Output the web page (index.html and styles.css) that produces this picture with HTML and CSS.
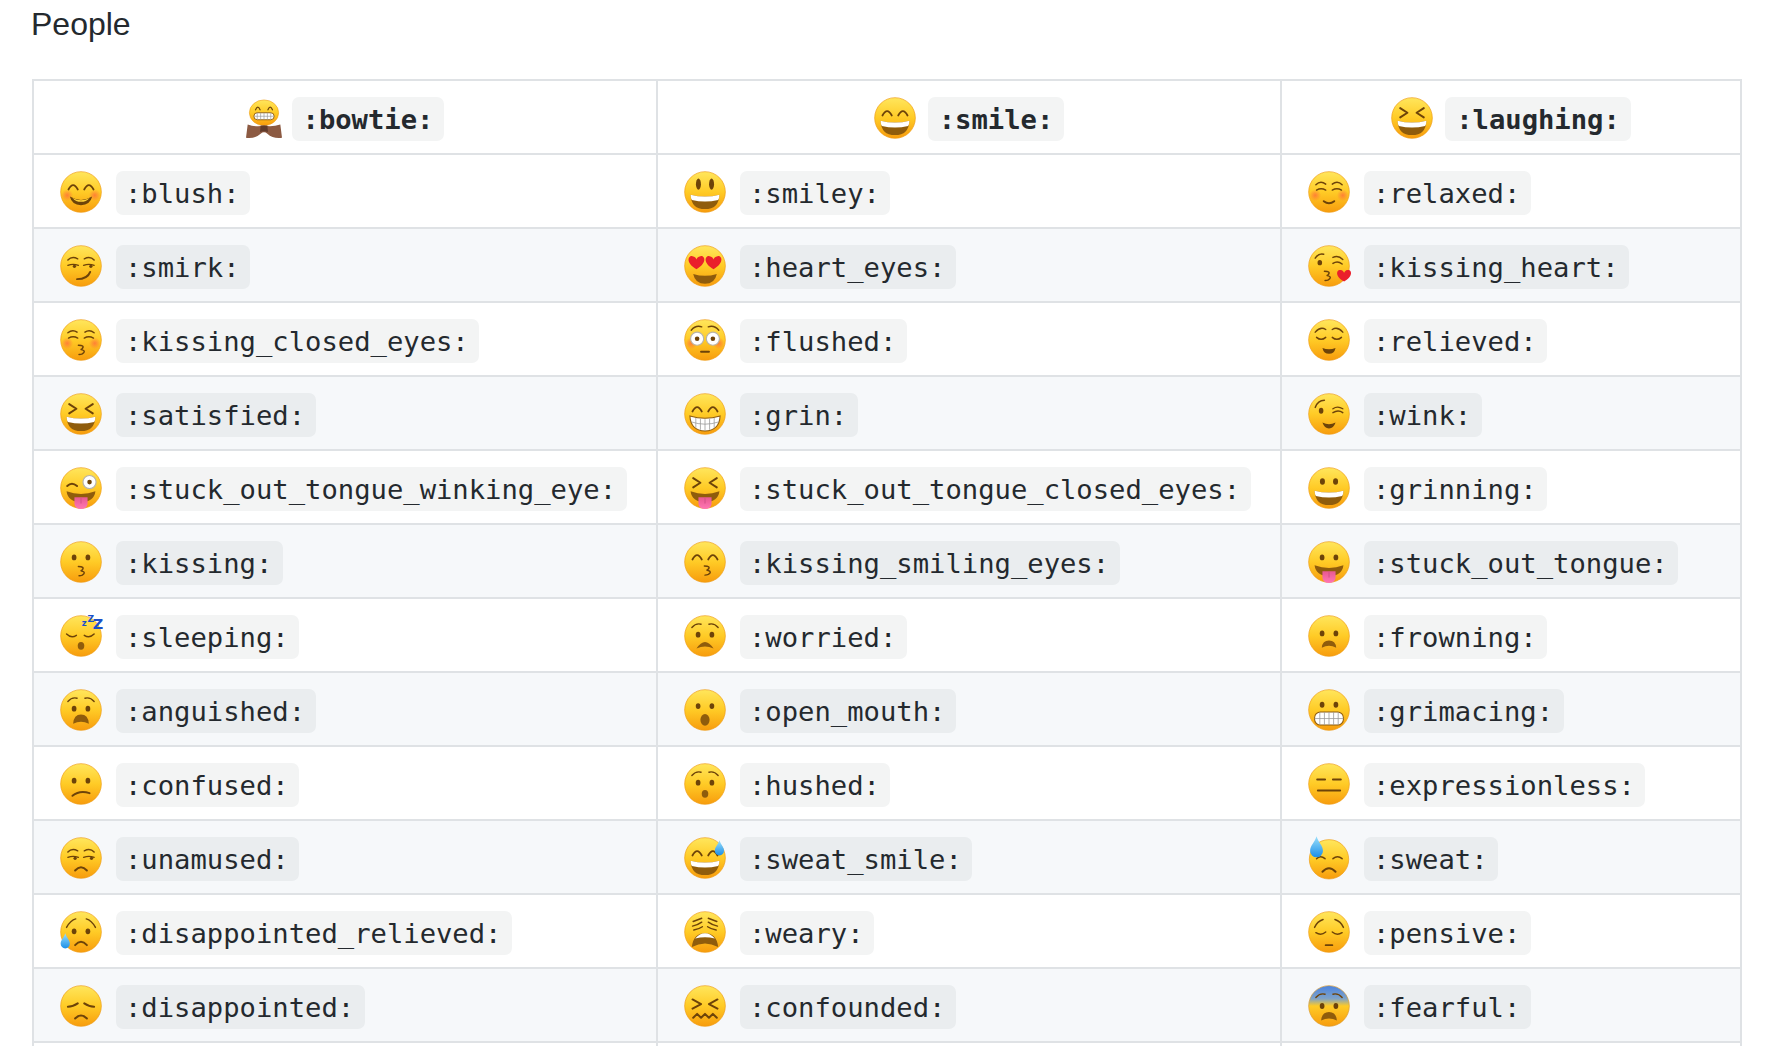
FILE: index.html
```html
<!DOCTYPE html>
<html lang="en">
<head>
<meta charset="utf-8">
<title>People</title>
<link rel="stylesheet" href="styles.css">
</head>
<body>
<svg class="sprite" aria-hidden="true">
  <defs>
    <linearGradient id="gFace" x1="0" y1="0" x2="0" y2="1">
      <stop offset="0" stop-color="#ffe65c"/><stop offset=".5" stop-color="#ffcb26"/><stop offset="1" stop-color="#f79c0d"/>
    </linearGradient>
    <linearGradient id="gFear" x1="0" y1="0" x2="0" y2="1">
      <stop offset="0" stop-color="#4a83e0"/><stop offset=".32" stop-color="#7fa3c8"/><stop offset=".5" stop-color="#ffcb26"/><stop offset="1" stop-color="#f79c0d"/>
    </linearGradient>
    <linearGradient id="gDrop" x1="0" y1="0" x2="0" y2="1">
      <stop offset="0" stop-color="#9be0fb"/><stop offset="1" stop-color="#1c8fe8"/>
    </linearGradient>
    <linearGradient id="gTongue" x1="0" y1="0" x2="0" y2="1">
      <stop offset="0" stop-color="#e8588f"/><stop offset="1" stop-color="#ff77b4"/>
    </linearGradient>
    <radialGradient id="gCheek">
      <stop offset="0" stop-color="#ff6a3c" stop-opacity=".75"/><stop offset="1" stop-color="#ff6a3c" stop-opacity="0"/>
    </radialGradient>

    <circle id="fc" class="face" cx="32" cy="32" r="31"/>
    <g id="cheeks"><circle cx="11" cy="37" r="9" fill="url(#gCheek)"/><circle cx="53" cy="37" r="9" fill="url(#gCheek)"/></g>
    <path id="eh" class="ln" d="M13 28Q20 15 27 28M37 28Q44 15 51 28"/>
    <g id="ed"><ellipse class="fl" cx="21.5" cy="25" rx="3.6" ry="4.4"/><ellipse class="fl" cx="42.5" cy="25" rx="3.6" ry="4.4"/></g>
    <path id="ex" class="ln" d="M14 17L25 24L14 31M50 17L39 24L50 31"/>
    <path id="bw" class="ln thin" d="M12 19Q18 12 26 14M52 19Q46 12 38 14"/>
    <g id="om"><path class="mo" d="M10 36Q32 42 54 36Q53 58 32 58Q11 58 10 36Z"/><path class="wh" d="M10 36Q32 42 54 36Q54 41 52 44Q32 49 12 44Q10 41 10 36Z"/></g>
    <path id="fr" class="ln" d="M23 51Q32 41 41 51"/>
    <path id="frs" class="mo" d="M19 52Q32 32 45 52Q32 46 19 52Z"/>
    <path id="ks" class="ln thin" d="M28 40Q38 40 34 45Q30 47 34 47Q40 49 34 53Q32 54 29 54"/>
    <path id="lids" class="ln thin" d="M12 23Q18 16 27 21M37 21Q46 16 52 23M12 31Q20 28 28 31M36 31Q44 28 52 31"/>
    <g id="tg"><path class="mo" d="M10 37Q32 45 54 37Q52 53 32 54Q12 53 10 37Z"/><path class="tongue" d="M22 46H42V56A10 8 0 0 1 22 56Z"/><path class="ln thin tline" d="M32 48V55"/></g>
    <path id="dr" class="drop" d="M0-13C2-6 7-3 7 3A7 7 0 0 1-7 3C-7-3-2-6 0-13Z"/>
    <path id="ht" class="heart" d="M0 8C-14 0-10-9-5-8-2-8 0-5 0-4 0-5 2-8 5-8 10-9 14 0 0 8Z"/>

    <g id="smile"><use href="#fc"/><use href="#eh"/><use href="#om"/></g>
    <g id="laughing"><use href="#fc"/><use href="#ex"/><use href="#om"/></g>
    <g id="bowtie">
      <ellipse class="face" cx="32" cy="27" rx="26" ry="22"/>
      <path class="ln thin" d="M17 22Q21 13 25 22M39 22Q43 13 47 22"/>
      <rect class="wh teeth" x="14" y="27" width="36" height="12" rx="6"/>
      <path class="tl" d="M14 33H50M20 27V39M26 27V39M32 27V39M38 27V39M44 27V39"/>
      <path class="bow" d="M3 47Q18 52 32 49Q46 52 61 47L64 70Q48 72 38 63Q32 58 26 63Q16 72 0 70Z"/>
      <path class="bowd" d="M26 49H38L39 60Q32 57 25 60Z"/>
    </g>
    <g id="blush"><use href="#fc"/><use href="#cheeks"/><use href="#eh"/><path class="fl" d="M15 39Q32 49 49 39Q46 52 32 52Q18 52 15 39Z"/><path class="face-fill" d="M19 41Q32 48 45 41Q40 47 32 47Q24 47 19 41Z"/></g>
    <g id="smiley"><use href="#fc"/><ellipse class="fl" cx="22" cy="20" rx="3.800" ry="8.500"/><ellipse class="fl" cx="42" cy="20" rx="3.800" ry="8.500"/><use href="#om"/></g>
    <g id="relaxed"><use href="#fc"/><use href="#cheeks"/><path class="ln thin" d="M12 21Q19 14 27 20M52 21Q45 14 37 20M13 29Q20 25 27 29M37 29Q44 25 51 29"/><path class="ln" d="M24 46Q32 52 40 46"/></g>
    <g id="smirk"><use href="#fc"/><use href="#lids"/><circle class="fl" cx="22" cy="32.500" r="2.500"/><circle class="fl" cx="47" cy="32.500" r="2.500"/><path class="ln" d="M26 52Q42 52 46 41"/></g>
    <g id="heart_eyes"><use href="#fc"/><path class="mo" d="M14 44Q32 50 50 44Q47 59 32 59Q17 59 14 44Z"/><use href="#ht" transform="translate(19 27) scale(1.250)"/><use href="#ht" transform="translate(45 27) scale(1.250)"/></g>
    <g id="kissing_heart"><use href="#fc"/><path class="ln thin" d="M11 20Q16 12 24 14M38 19Q46 15 53 22M38 28Q45 23 52 29"/><ellipse class="fl" cx="18" cy="27" rx="3.500" ry="4"/><use href="#ks" transform="translate(-3 0)"/><use href="#ht" transform="translate(55 47) scale(1.100)"/></g>
    <g id="kissing_closed_eyes"><use href="#fc"/><use href="#cheeks"/><path class="ln thin" d="M12 21Q19 15 26 20M52 21Q45 15 38 20M13 29Q20 25 27 29M37 29Q44 25 51 29"/><use href="#ks"/></g>
    <g id="flushed"><use href="#fc"/><use href="#cheeks"/><path class="ln thin" d="M11 17Q18 9 27 12M53 17Q46 9 37 12"/><circle class="eyew" cx="20" cy="30" r="10"/><circle class="eyew" cx="44" cy="30" r="10"/><circle class="fl" cx="20" cy="30" r="3.500"/><circle class="fl" cx="44" cy="30" r="3.500"/><path class="ln" d="M26 50H38"/></g>
    <g id="relieved"><use href="#fc"/><path class="ln thin" d="M11 20Q19 11 27 16M53 20Q45 11 37 16M13 28Q20 34 27 28M37 28Q44 34 51 28"/><path class="fl" d="M22 44Q32 48 42 44Q40 53 32 53Q24 53 22 44Z"/></g>
    <g id="grin"><use href="#fc"/><use href="#eh"/><path class="wh teeth" d="M9 35Q32 42 55 35Q54 57 32 58Q10 57 9 35Z"/><path class="tl" d="M11 44Q32 51 53 44M18 38V53M25 39V56M32 40V58M39 39V56M46 38V53"/></g>
    <g id="wink"><use href="#fc"/><path class="ln thin" d="M11 22Q15 11 25 11M38 24Q45 19 53 24M38 30Q46 25 53 30"/><ellipse class="fl" cx="20" cy="27" rx="3.500" ry="4.500"/><path class="fl" d="M22 45Q32 50 42 45Q39 54 32 54Q25 54 22 45Z"/></g>
    <g id="stuck_out_tongue_winking_eye"><use href="#fc"/><path class="ln" d="M11 29Q18 22 26 29"/><circle class="eyew" cx="45" cy="23" r="10"/><circle class="fl" cx="45" cy="23" r="3.500"/><use href="#tg"/></g>
    <g id="stuck_out_tongue_closed_eyes"><use href="#fc"/><use href="#ex"/><use href="#tg"/></g>
    <g id="grinning"><use href="#fc"/><ellipse class="fl" cx="22" cy="22" rx="3.800" ry="5"/><ellipse class="fl" cx="42" cy="22" rx="3.800" ry="5"/><use href="#om"/></g>
    <g id="kissing"><use href="#fc"/><use href="#ed"/><use href="#ks" transform="translate(0 -1)"/></g>
    <g id="kissing_smiling_eyes"><use href="#fc"/><use href="#eh"/><use href="#ks" transform="translate(3 -2)"/></g>
    <g id="stuck_out_tongue"><use href="#fc"/><use href="#ed"/><use href="#tg"/></g>
    <g id="sleeping"><use href="#fc"/><path class="ln thin" d="M10 29Q17 36 25 31M37 31Q45 36 52 29"/><ellipse class="mo" cx="32" cy="47" rx="5" ry="6"/><text class="zz z1" x="33" y="16">z</text><text class="zz z2" x="42" y="11">Z</text><text class="zz z3" x="50" y="21">Z</text></g>
    <g id="worried"><use href="#fc"/><use href="#bw"/><use href="#ed" transform="translate(0 5)"/><use href="#frs" transform="translate(0 -1)"/></g>
    <g id="frowning"><use href="#fc"/><use href="#ed" transform="translate(0 3)"/><path class="mo" d="M21 50Q22 39 32 39Q42 39 43 50Q32 44 21 50Z"/></g>
    <g id="anguished"><use href="#fc"/><use href="#bw"/><use href="#ed" transform="translate(0 5)"/><path class="mo" d="M20 53Q21 39 32 39Q43 39 44 53Q32 47 20 53Z"/></g>
    <g id="open_mouth"><use href="#fc"/><use href="#ed" transform="translate(0 1)"/><ellipse class="mo" cx="32" cy="47" rx="7" ry="9"/></g>
    <g id="grimacing"><use href="#fc"/><use href="#ed" transform="translate(0 -1)"/><rect class="wh teeth" x="10" y="35" width="44" height="20" rx="9"/><path class="tl" d="M10 45H54M18 35V55M25 35V55M32 35V55M39 35V55M46 35V55"/></g>
    <g id="confused"><use href="#fc"/><use href="#ed" transform="translate(0 2)"/><path class="ln" d="M19 50Q30 41 45 46"/></g>
    <g id="hushed"><use href="#fc"/><use href="#bw"/><use href="#ed" transform="translate(0 5)"/><ellipse class="mo" cx="32" cy="47" rx="5" ry="6"/></g>
    <g id="expressionless"><use href="#fc"/><path class="ln" d="M14 25H26M38 25H50M15 42H49"/></g>
    <g id="unamused"><use href="#fc"/><use href="#lids"/><circle class="fl" cx="23" cy="32.500" r="2.500"/><circle class="fl" cx="48" cy="32.500" r="2.500"/><use href="#fr"/></g>
    <g id="sweat_smile"><use href="#fc"/><use href="#eh"/><use href="#om"/><use href="#dr" transform="translate(54 18)"/></g>
    <g id="sweat"><circle class="face" cx="32" cy="34" r="30"/><path class="ln thin" d="M13 33Q19 27 26 33M38 33Q45 27 52 33"/><path class="ln" d="M22 53Q32 42 42 53"/><use href="#dr" transform="translate(13 17) scale(1.400)"/></g>
    <g id="disappointed_relieved"><use href="#fc"/><path class="ln thin" d="M10 25Q16 14 24 12M54 25Q48 14 40 12"/><use href="#ed" transform="translate(0 6)"/><use href="#fr" transform="translate(0 1)"/><use href="#dr" transform="translate(8 47)"/></g>
    <g id="weary"><use href="#fc"/><path class="ln thin" d="M14 16L27 11M50 16L37 11M13 23Q20 22 27 17M51 23Q44 22 37 17M15 29Q22 28 28 24M49 29Q42 28 36 24"/><path class="mo" d="M12 55Q14 34 32 34Q50 34 52 55Q32 44 12 55Z"/><path class="wh" d="M17 42Q24 34 32 34Q40 34 47 42Q32 38 17 42Z"/></g>
    <g id="pensive"><use href="#fc"/><path class="ln thin" d="M10 25Q14 16 23 13M54 25Q50 16 41 13M12 33Q20 38 27 32M37 32Q44 38 52 33"/><path class="ln" d="M27 52H37"/></g>
    <g id="disappointed"><use href="#fc"/><path class="ln" d="M12 33Q20 33 27 28M52 33Q44 33 37 28M23 51Q32 42 41 51"/></g>
    <g id="confounded"><use href="#fc"/><path class="ln" d="M13 22L26 29L13 36M51 22L38 29L51 36M14 50L20 44L26 50L32 44L38 50L44 44L50 50"/></g>
    <g id="fearful"><circle class="fear" cx="32" cy="32" r="31"/><use href="#bw"/><use href="#ed" transform="translate(0 7)"/><path class="mo" d="M20 54Q21 41 32 41Q43 41 44 54Q32 48 20 54Z"/></g>
  </defs>
</svg>

<h2 class="title">People</h2>

<table class="emoji-table">
  <colgroup><col class="col-wide"><col class="col-wide"><col class="col-narrow"></colgroup>
  <thead>
    <tr>
      <th><span class="item"><svg class="emo emo-bow" viewBox="0 0 64 72" preserveAspectRatio="none"><use href="#bowtie"/></svg><code>:bowtie:</code></span></th>
      <th><span class="item"><svg class="emo" viewBox="0 0 64 64"><use href="#smile"/></svg><code>:smile:</code></span></th>
      <th><span class="item"><svg class="emo" viewBox="0 0 64 64"><use href="#laughing"/></svg><code>:laughing:</code></span></th>
    </tr>
  </thead>
  <tbody>
    <tr>
      <td><span class="item"><svg class="emo" viewBox="0 0 64 64"><use href="#blush"/></svg><code>:blush:</code></span></td>
      <td><span class="item"><svg class="emo" viewBox="0 0 64 64"><use href="#smiley"/></svg><code>:smiley:</code></span></td>
      <td><span class="item"><svg class="emo" viewBox="0 0 64 64"><use href="#relaxed"/></svg><code>:relaxed:</code></span></td>
    </tr>
    <tr>
      <td><span class="item"><svg class="emo" viewBox="0 0 64 64"><use href="#smirk"/></svg><code>:smirk:</code></span></td>
      <td><span class="item"><svg class="emo" viewBox="0 0 64 64"><use href="#heart_eyes"/></svg><code>:heart_eyes:</code></span></td>
      <td><span class="item"><svg class="emo" viewBox="0 0 64 64"><use href="#kissing_heart"/></svg><code>:kissing_heart:</code></span></td>
    </tr>
    <tr>
      <td><span class="item"><svg class="emo" viewBox="0 0 64 64"><use href="#kissing_closed_eyes"/></svg><code>:kissing_closed_eyes:</code></span></td>
      <td><span class="item"><svg class="emo" viewBox="0 0 64 64"><use href="#flushed"/></svg><code>:flushed:</code></span></td>
      <td><span class="item"><svg class="emo" viewBox="0 0 64 64"><use href="#relieved"/></svg><code>:relieved:</code></span></td>
    </tr>
    <tr>
      <td><span class="item"><svg class="emo" viewBox="0 0 64 64"><use href="#laughing"/></svg><code>:satisfied:</code></span></td>
      <td><span class="item"><svg class="emo" viewBox="0 0 64 64"><use href="#grin"/></svg><code>:grin:</code></span></td>
      <td><span class="item"><svg class="emo" viewBox="0 0 64 64"><use href="#wink"/></svg><code>:wink:</code></span></td>
    </tr>
    <tr>
      <td><span class="item"><svg class="emo" viewBox="0 0 64 64"><use href="#stuck_out_tongue_winking_eye"/></svg><code>:stuck_out_tongue_winking_eye:</code></span></td>
      <td><span class="item"><svg class="emo" viewBox="0 0 64 64"><use href="#stuck_out_tongue_closed_eyes"/></svg><code>:stuck_out_tongue_closed_eyes:</code></span></td>
      <td><span class="item"><svg class="emo" viewBox="0 0 64 64"><use href="#grinning"/></svg><code>:grinning:</code></span></td>
    </tr>
    <tr>
      <td><span class="item"><svg class="emo" viewBox="0 0 64 64"><use href="#kissing"/></svg><code>:kissing:</code></span></td>
      <td><span class="item"><svg class="emo" viewBox="0 0 64 64"><use href="#kissing_smiling_eyes"/></svg><code>:kissing_smiling_eyes:</code></span></td>
      <td><span class="item"><svg class="emo" viewBox="0 0 64 64"><use href="#stuck_out_tongue"/></svg><code>:stuck_out_tongue:</code></span></td>
    </tr>
    <tr>
      <td><span class="item"><svg class="emo" viewBox="0 0 64 64"><use href="#sleeping"/></svg><code>:sleeping:</code></span></td>
      <td><span class="item"><svg class="emo" viewBox="0 0 64 64"><use href="#worried"/></svg><code>:worried:</code></span></td>
      <td><span class="item"><svg class="emo" viewBox="0 0 64 64"><use href="#frowning"/></svg><code>:frowning:</code></span></td>
    </tr>
    <tr>
      <td><span class="item"><svg class="emo" viewBox="0 0 64 64"><use href="#anguished"/></svg><code>:anguished:</code></span></td>
      <td><span class="item"><svg class="emo" viewBox="0 0 64 64"><use href="#open_mouth"/></svg><code>:open_mouth:</code></span></td>
      <td><span class="item"><svg class="emo" viewBox="0 0 64 64"><use href="#grimacing"/></svg><code>:grimacing:</code></span></td>
    </tr>
    <tr>
      <td><span class="item"><svg class="emo" viewBox="0 0 64 64"><use href="#confused"/></svg><code>:confused:</code></span></td>
      <td><span class="item"><svg class="emo" viewBox="0 0 64 64"><use href="#hushed"/></svg><code>:hushed:</code></span></td>
      <td><span class="item"><svg class="emo" viewBox="0 0 64 64"><use href="#expressionless"/></svg><code>:expressionless:</code></span></td>
    </tr>
    <tr>
      <td><span class="item"><svg class="emo" viewBox="0 0 64 64"><use href="#unamused"/></svg><code>:unamused:</code></span></td>
      <td><span class="item"><svg class="emo" viewBox="0 0 64 64"><use href="#sweat_smile"/></svg><code>:sweat_smile:</code></span></td>
      <td><span class="item"><svg class="emo" viewBox="0 0 64 64"><use href="#sweat"/></svg><code>:sweat:</code></span></td>
    </tr>
    <tr>
      <td><span class="item"><svg class="emo" viewBox="0 0 64 64"><use href="#disappointed_relieved"/></svg><code>:disappointed_relieved:</code></span></td>
      <td><span class="item"><svg class="emo" viewBox="0 0 64 64"><use href="#weary"/></svg><code>:weary:</code></span></td>
      <td><span class="item"><svg class="emo" viewBox="0 0 64 64"><use href="#pensive"/></svg><code>:pensive:</code></span></td>
    </tr>
    <tr>
      <td><span class="item"><svg class="emo" viewBox="0 0 64 64"><use href="#disappointed"/></svg><code>:disappointed:</code></span></td>
      <td><span class="item"><svg class="emo" viewBox="0 0 64 64"><use href="#confounded"/></svg><code>:confounded:</code></span></td>
      <td><span class="item"><svg class="emo" viewBox="0 0 64 64"><use href="#fearful"/></svg><code>:fearful:</code></span></td>
    </tr>
    <tr>
      <td></td>
      <td></td>
      <td></td>
    </tr>
  </tbody>
</table>
</body>
</html>
```

FILE: styles.css
```css
html, body {
  margin: 0;
  height: 100%;
  overflow: hidden;
  background: #fff;
}

body {
  color: #24292e;
  font-family: "Liberation Sans", Arial, sans-serif;
}

.sprite {
  position: absolute;
  width: 0;
  height: 0;
}

.title {
  box-sizing: border-box;
  height: 79px;
  margin: 0;
  padding: 2px 0 0 31px;
  font-size: 32px;
  font-weight: 400;
  line-height: 44px;
}

.emoji-table {
  box-sizing: border-box;
  width: 1710px;
  margin-left: 32px;
  border-collapse: separate;
  border-spacing: 0;
  table-layout: fixed;
  border-top: 2px solid #dfe2e5;
  border-left: 2px solid #dfe2e5;
}

.col-wide { width: 624px; }
.col-narrow { width: auto; }

th, td {
  box-sizing: border-box;
  height: 74px;
  padding: 16px 26px 0;
  border-right: 2px solid #dfe2e5;
  border-bottom: 2px solid #dfe2e5;
  vertical-align: top;
  text-align: left;
  font-weight: 400;
}

th { text-align: center; }

tbody tr:nth-child(2n) { background: #f6f8fa; }

.item {
  display: inline-flex;
  align-items: flex-start;
  gap: 14px;
}

th .item { gap: 12px; }

.emo {
  flex: none;
  width: 42px;
  height: 42px;
  overflow: visible;
}

.emo-bow {
  width: 36px;
  margin-right: -2px;
}

code {
  display: block;
  height: 44px;
  padding: 0 10.5px 0 9px;
  border-radius: 7px;
  background: rgba(27, 31, 35, .05);
  font-family: "DejaVu Sans Mono", "Liberation Mono", monospace;
  font-size: 27.2px;
  line-height: 46px;
  white-space: nowrap;
}

th code {
  padding: 0 11px;
  font-weight: 700;
}

/* emoji parts */
.face { fill: url(#gFace); stroke: #ee9a12; stroke-width: 1; }
.face-fill { fill: #ffd23a; }
.fear { fill: url(#gFear); stroke: #d99a30; stroke-width: 1; }
.ln { fill: none; stroke: #6d4309; stroke-width: 3; stroke-linecap: round; stroke-linejoin: round; }
.thin { stroke-width: 2.2; }
.fl { fill: #6d4309; }
.mo { fill: #8f5c0c; }
.wh { fill: #fff; }
.teeth { stroke: #8f5c0c; stroke-width: 1.6; }
.tl { fill: none; stroke: #9a9a9a; stroke-width: 1.2; }
.tongue { fill: url(#gTongue); }
.tline { stroke: #d14f86; stroke-width: 1.5; }
.drop { fill: url(#gDrop); }
.heart { fill: #ea1f2b; }
.eyew { fill: #fff; stroke: #b9b4a8; stroke-width: 1.8; }
.bow { fill: #8c5a42; }
.bowd { fill: #5f3a2a; }
.zz { fill: #1a50c8; font-family: "DejaVu Sans", sans-serif; font-weight: 700; }
.z1 { font-size: 13px; }
.z2 { font-size: 14px; }
.z3 { font-size: 22px; }
```
